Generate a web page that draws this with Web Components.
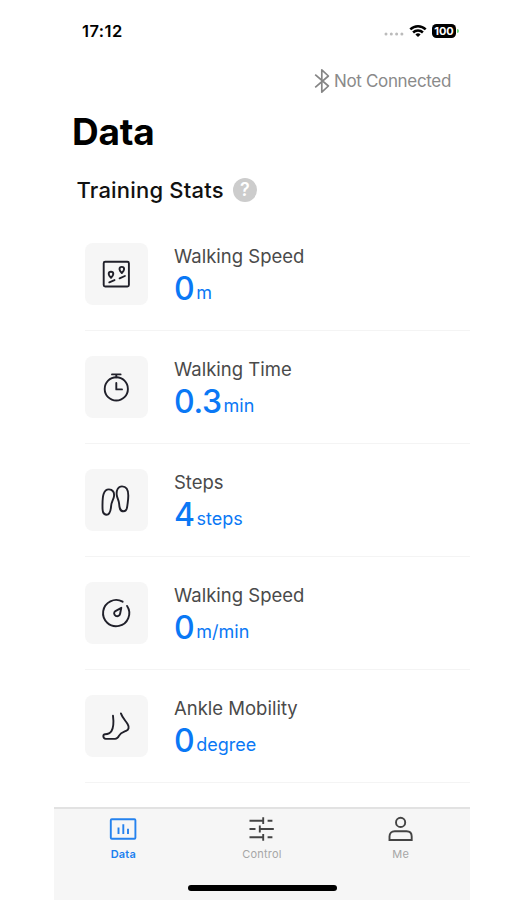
<!DOCTYPE html>
<html lang="en">
<head>
<meta charset="utf-8">
<meta name="viewport" content="width=device-width, initial-scale=1">
<title>Data</title>
<style>
  body {
    margin: 0;
    background: #fff;
    font-family: Inter, "Liberation Sans", sans-serif;
  }
</style>
</head>
<body>
<data-screen>
  <status-bar slot="status">17:12</status-bar>
  <connection-state slot="status">Not Connected</connection-state>
  <span slot="title">Data</span>
  <section-title>Training Stats</section-title>
  <stat-row icon="map"><span slot="label">Walking Speed</span><span slot="value">0</span><span slot="unit">m</span></stat-row>
  <stat-row icon="timer"><span slot="label">Walking Time</span><span slot="value">0.3</span><span slot="unit">min</span></stat-row>
  <stat-row icon="steps"><span slot="label">Steps</span><span slot="value">4</span><span slot="unit">steps</span></stat-row>
  <stat-row icon="gauge"><span slot="label">Walking Speed</span><span slot="value">0</span><span slot="unit">m/min</span></stat-row>
  <stat-row icon="foot"><span slot="label">Ankle Mobility</span><span slot="value">0</span><span slot="unit">degree</span></stat-row>
  <tab-bar slot="tabs">
    <tab-item icon="chart" active>Data</tab-item>
    <tab-item icon="sliders">Control</tab-item>
    <tab-item icon="person">Me</tab-item>
  </tab-bar>
</data-screen>

<script>
const icons = {
  map: `<rect x="3.7" y="3.7" width="25.2" height="24.8" rx="1.5"/>
    <path d="M11 19.8c-1.5-1.6-2.3-2.7-2.3-3.8a2.3 2.3 0 0 1 4.6 0c0 1.1-.8 2.2-2.3 3.8zM21.8 15c-1.5-1.6-2.3-2.7-2.3-3.8a2.3 2.3 0 0 1 4.6 0c0 1.1-.8 2.2-2.3 3.8z"/>
    <path d="M9.3 24.3l5.2-2.2M19.6 20.3l5.3-2.3"/>`,
  timer: `<circle cx="16.3" cy="17.9" r="11.6"/><path d="M12 3.4h8.6M16.3 3.4v3M16.3 12v6.4h5.7"/>`,
  steps: `<path d="M8.9 5.4c3.9 0 5.6 2.9 5.1 6.9-.4 3.2-2.6 5.4-2.9 9.8-.4 5.2-1.3 8.6-4.5 8.6-4.6 0-4.1-5.5-4.1-10.1 0-8.1.8-15.2 6.4-15.2z"/>
    <path d="M22 2.4c5 0 6.3 4.5 6.3 9.1 0 4.7-.6 7.1-1 10.5-.3 3.2-1.3 5.3-3.8 5.3-3.7 0-4.1-3.5-4.4-7.7-.3-3.8-2.1-5.6-2.4-9-.4-4.3 1.3-8.2 5.3-8.2z"/>`,
  gauge: `<path d="M22.6 4.7A13.1 13.1 0 1 0 27.1 8.9"/>
    <path d="M21.3 10.8l-1.2 5.9c-.5 2.3-2.5 3-4.4 2.1-2-1-2.1-3.4-.3-4.7z"/>`,
  foot: `<path d="M13 5.8c.7 5.4 1 10.7-1.5 15.2-1.4 2.4-3.3 3.2-6.4 3.2-2.6 0-2.3 4.3.7 4.7h9.3c2.3 0 3-1.2 4-3.2 1.6-3.2 3.8-3.4 7-4.8 2.7-1.2 3.3-3.8 1.6-6.7-2.2-3.7-5.2-6.1-6.8-10.8"/>`,
  chart: `<rect x="3.8" y="4.2" width="24.6" height="19.6" rx="1"/><path d="M11.5 12.4v6.6M16.3 9.2v9.8M21 13.8v5.2"/>`,
  sliders: `<path d="M3.5 5.7h13.5M21.6 5.7h4.8M17.2 2.3v6.8M3.5 14h6M13.8 14h14M13.8 10.6v6.8M3.5 22.3h13.5M21.6 22.3h4.8M17.2 18.9v6.8"/>`,
  person: `<circle cx="15.6" cy="7.4" r="4.6"/><path d="M4.5 25v-3.5c0-3.3 2-5.2 5.2-5.2h11.8c3.2 0 5.2 1.9 5.2 5.2V25z"/>`
};

class BaseElement extends HTMLElement {
  constructor() {
    super();
    this.attachShadow({ mode: "open" });
  }

  connectedCallback() {
    const template = document.createElement("template");
    template.innerHTML = this.getStyles() + this.getMarkup();
    this.shadowRoot.replaceChildren(template.content.cloneNode(true));
  }
}

class DataScreen extends BaseElement {
  getMarkup() {
    return `
      <header><slot name="status"></slot></header>
      <h1><slot name="title"></slot></h1>
      <main><slot></slot></main>
      <slot name="tabs"></slot>
    `;
  }

  getStyles() {
    return `
      <style>
        :host {
          display: flex;
          flex-direction: column;
          width: 416px;
          height: 900px;
          margin-left: 54px;
          overflow: hidden;
        }
        header { height: 108px; flex: none; }
        h1 {
          flex: none;
          margin: 0 0 0 18px;
          height: 48px;
          font-size: 37px;
          line-height: 48px;
          font-weight: 700;
          letter-spacing: -0.2px;
        }
        main { flex: 1; }
      </style>
    `;
  }
}

class StatusBar extends BaseElement {
  getMarkup() {
    return `
      <time><slot></slot></time>
      <svg width="20" height="6" viewBox="0 0 20 6" fill="#bbb">
        <circle cx="2" cy="3" r="1.5"/><circle cx="7.3" cy="3" r="1.5"/><circle cx="12.6" cy="3" r="1.5"/><circle cx="17.9" cy="3" r="1.5"/>
      </svg>
      <svg class="wifi" width="18" height="14" viewBox="0 0 18 14" fill="none" stroke="#000" stroke-width="2.5">
        <path d="M1.3 5.3a11 11 0 0 1 15.4 0M4.1 8.5a7 7 0 0 1 9.8 0"/>
        <path d="M9 13.1L6.4 10.5a3.7 3.7 0 0 1 5.2 0z" fill="#000" stroke="none"/>
      </svg>
      <b>100</b><i></i>
    `;
  }

  getStyles() {
    return `
      <style>
        :host {
          display: flex;
          align-items: center;
          height: 61px;
          padding: 0 11px 0 28px;
        }
        time {
          flex: 1;
          font-size: 16.5px;
          font-weight: 600;
          letter-spacing: 0.45px;
        }
        svg { margin-top: 7px; }
        .wifi { margin: 0 5px 0 5px; }
        b {
          width: 24px;
          height: 14px;
          border-radius: 4.5px;
          background: #000;
          color: #fff;
          font-size: 11px;
          line-height: 14px;
          text-align: center;
        }
        i {
          width: 2px;
          height: 4px;
          margin-left: 1px;
          border-radius: 0 2px 2px 0;
          background: #6ddb7d;
        }
      </style>
    `;
  }
}

class ConnectionState extends BaseElement {
  getMarkup() {
    return `
      <svg width="16" height="26" viewBox="0 0 16 26" fill="none" stroke="#858585" stroke-width="1.7" stroke-linejoin="round">
        <path d="M1.2 6.6L14.4 18 7.8 24.2V1.8L14.4 8 1.2 19.4"/>
      </svg>
      <span><slot></slot></span>
    `;
  }

  getStyles() {
    return `
      <style>
        :host {
          display: flex;
          justify-content: flex-end;
          align-items: center;
          gap: 4px;
          height: 39px;
          padding-right: 19px;
          color: #8a8a8a;
          font-size: 17px;
          letter-spacing: -0.33px;
        }
      </style>
    `;
  }
}

class SectionTitle extends BaseElement {
  getMarkup() {
    return `<h2><slot></slot></h2><span>?</span>`;
  }

  getStyles() {
    return `
      <style>
        :host {
          display: flex;
          align-items: center;
          gap: 9px;
          box-sizing: border-box;
          height: 62px;
          padding: 5px 0 0 22.5px;
        }
        h2 {
          margin: 0;
          font-size: 22px;
          font-weight: 500;
          letter-spacing: 0.2px;
          color: #111;
        }
        span {
          width: 24px;
          height: 24px;
          border-radius: 50%;
          background: #ccc;
          color: #fff;
          font-size: 18px;
          font-weight: 600;
          line-height: 24px;
          text-align: center;
        }
      </style>
    `;
  }
}

class StatRow extends BaseElement {
  getMarkup() {
    return `
      <div class="tile"><svg width="32" height="32" viewBox="0 0 32 32">${icons[this.getAttribute("icon")]}</svg></div>
      <div class="text">
        <div class="label"><slot name="label"></slot></div>
        <div class="reading"><span class="value"><slot name="value"></slot></span><span class="unit"><slot name="unit"></slot></span></div>
      </div>
    `;
  }

  getStyles() {
    return `
      <style>
        :host {
          display: flex;
          box-sizing: border-box;
          height: 113px;
          margin-left: 31px;
          padding-top: 25px;
          border-bottom: 1px solid #f4f4f4;
        }
        .tile {
          box-sizing: border-box;
          width: 63px;
          height: 62px;
          padding: 15px 0 0 15px;
          border-radius: 8px;
          background: #f6f6f6;
        }
        svg {
          display: block;
          fill: none;
          stroke: #20202a;
          stroke-width: 1.9;
          stroke-linecap: round;
          stroke-linejoin: round;
        }
        .text { margin-left: 26px; }
        .label {
          height: 27px;
          color: #4a4a4a;
          font-size: 18.5px;
          line-height: 27px;
        }
        .reading {
          display: flex;
          align-items: baseline;
          gap: 2px;
          color: #0a78f5;
          line-height: 38px;
        }
        .value {
          font-size: 32px;
          font-weight: 500;
          letter-spacing: -0.4px;
        }
        .unit {
          font-size: 18px;
          transform: translateY(-1px);
        }
      </style>
    `;
  }
}

class TabBar extends BaseElement {
  getMarkup() {
    return `<nav><slot></slot></nav><div class="home"></div>`;
  }

  getStyles() {
    return `
      <style>
        :host {
          flex: none;
          box-sizing: border-box;
          height: 93px;
          border-top: 2px solid #e2e2e2;
          background: #f6f6f6;
        }
        nav {
          display: grid;
          grid-template-columns: repeat(3, 1fr);
          height: 76px;
        }
        .home {
          width: 149px;
          height: 6px;
          margin: 0 auto;
          border-radius: 3px;
          background: #000;
        }
      </style>
    `;
  }
}

class TabItem extends BaseElement {
  getMarkup() {
    return `
      <svg width="32" height="29" viewBox="0 0 32 29">${icons[this.getAttribute("icon")]}</svg>
      <span><slot></slot></span>
    `;
  }

  getStyles() {
    return `
      <style>
        :host {
          display: flex;
          flex-direction: column;
          align-items: center;
          padding-top: 6px;
          color: #a6a6a6;
          font-size: 11px;
          font-weight: 400;
          letter-spacing: 0.2px;
          --stroke: #444;
        }
        :host([active]) {
          color: #1b7ff0;
          font-weight: 600;
          --stroke: #2582ee;
        }
        svg {
          fill: none;
          stroke: var(--stroke);
          stroke-width: 1.9;
        }
        span { margin-top: 3px; line-height: 15px; }
      </style>
    `;
  }
}

customElements.define("data-screen", DataScreen);
customElements.define("status-bar", StatusBar);
customElements.define("connection-state", ConnectionState);
customElements.define("section-title", SectionTitle);
customElements.define("stat-row", StatRow);
customElements.define("tab-bar", TabBar);
customElements.define("tab-item", TabItem);
</script>
</body>
</html>
